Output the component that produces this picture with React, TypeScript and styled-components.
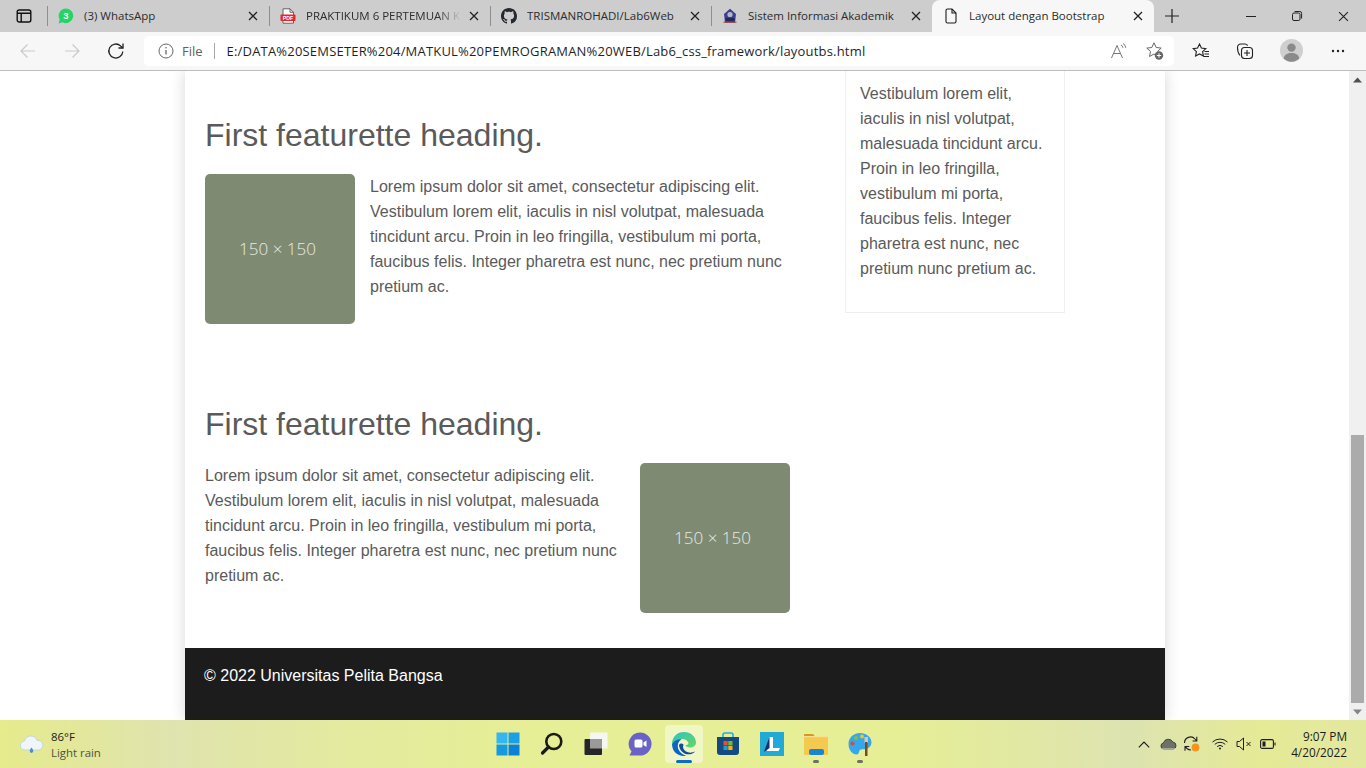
import React from "react";
import styled, { createGlobalStyle } from "styled-components";

const Global = createGlobalStyle`
  html, body { margin: 0; padding: 0; height: 100%; overflow: hidden; background: #fff; }
  * { box-sizing: border-box; }
`;
const Root = styled.div`
  width: 1366px; height: 768px; display: flex; flex-direction: column; overflow: hidden;
  font-family: "Open Sans", "Noto Sans", sans-serif; color: #222;
`;
/* ---------- tab strip ---------- */
const TabStrip = styled.div`
  height: 32px; background: #cdcdcd; display: flex; align-items: stretch; flex: none;
`;
const TabMenu = styled.div`
  width: 47px; display: flex; align-items: center; justify-content: center; padding-left: 1px;
`;
const TabSep = styled.span`
  width: 1px; align-self: center; height: 20px; background: #8e8e8e; flex: none;
`;
const TabGroup = styled.div`
  display: flex; align-items: center;
`;
const TabBody = styled.div<{ $active?: boolean; $w?: number }>`
  width: ${p => p.$w ?? 220}px; height: 32px; display: flex; align-items: center;
  padding: 0 8px 0 ${p => (p.$active ? 11 : 10)}px;
  ${p => p.$active ? "background: #f7f7f7; border-radius: 8px 8px 0 0;" : ""}
`;
const Favicon = styled.span`
  width: 16px; height: 16px; flex: none; display: flex; align-items: center; justify-content: center;
`;
const TabTitle = styled.span<{ $fade?: boolean }>`
  flex: 1; margin-left: 10px; min-width: 0; white-space: nowrap; overflow: hidden; font-size: 11.5px; line-height: 16px; color: #2c2c2c;
  ${p => p.$fade ? "-webkit-mask-image: linear-gradient(to right, #000 82%, transparent 97%); mask-image: linear-gradient(to right, #000 82%, transparent 97%);" : ""}
`;
const TabClose = styled.span`
  width: 16px; height: 16px; flex: none; display: flex; align-items: center; justify-content: center;
`;
const StripEnd = styled.div`
  flex: 1; display: flex; align-items: center;
`;
const NewTab = styled.span`
  margin-left: 10px; width: 16px; height: 16px; display: flex;
`;
const WinButtons = styled.div`
  margin-left: auto; display: flex; align-items: center;
`;
const WinButton = styled.span`
  width: 46px; height: 32px; display: flex; align-items: center; justify-content: center;
`;
/* ---------- toolbar ---------- */
const Toolbar = styled.div`
  height: 39px; flex: none; background: #f7f7f7; border-bottom: 1px solid #bdbdbd; display: flex; align-items: center; padding: 0 0 1px 0;
`;
const ToolButton = styled.span<{ $w?: number }>`
  width: ${p => p.$w ?? 44}px; height: 30px; flex: none; display: flex; align-items: center; justify-content: center;
`;
const NavGroup = styled.div`
  display: flex; padding-left: 6px; width: 144px;
`;
const Address = styled.div`
  width: 1030px; height: 30px; background: #fff; border-radius: 5px; display: flex; align-items: center; padding: 0 0 0 14px;
`;
const FileLabel = styled.span`
  font-size: 13px; color: #5f5f5f; margin-left: 8px;
`;
const AddrSep = styled.span`
  width: 1px; height: 16px; background: #a8a8a8; margin: 0 12px 0 11px;
`;
const Url = styled.span`
  font-size: 13px; color: #1f1f1f; white-space: nowrap; flex: 1; letter-spacing: 0.19px;
`;
const AddrEnd = styled.div`
  display: flex; align-items: center; gap: 17px; padding-right: 9px;
`;
const ToolEnd = styled.div`
  display: flex; align-items: center; padding-left: 5px;
`;
/* ---------- page ---------- */
const Viewport = styled.div`
  flex: 1; min-height: 0; display: flex; background: #fff; overflow: hidden;
`;
const PageArea = styled.div`
  flex: 1; min-width: 0; display: flex; padding-left: 185px;
`;
const Container = styled.div`
  width: 980px; height: 649px; background: #fff; display: flex; flex-direction: column;
  box-shadow: 0 0 14px rgba(0,0,0,0.16);
  font-family: "Liberation Sans", Arial, sans-serif; color: #5a5a5a; font-size: 16px; line-height: 25px;
`;
const Columns = styled.div`
  flex: 1; min-height: 0; display: flex; padding: 0 20px; gap: 55px;
`;
const Main = styled.div`
  width: 585px; display: flex; flex-direction: column; padding-top: 45px; gap: 81px;
`;
const Feature = styled.section`
  display: flex; flex-direction: column;
`;
const Heading = styled.h2`
  margin: 0 0 20px; font-weight: 400; font-size: 32px; line-height: 38px; height: 38px; color: #5a5a5a;
`;
const Media = styled.div`
  display: flex; gap: 15px; align-items: flex-start;
`;
const Placeholder = styled.div`
  width: 150px; height: 150px; flex: none; border-radius: 5px; background: #7f8a73; color: #e8ebe2;
  display: flex; align-items: center; justify-content: center; padding-right: 5px; padding-bottom: 1px;
  font-family: "Open Sans", sans-serif; font-weight: 300; font-size: 17px;
`;
const Lead = styled.p`
  margin: 0; flex: 1;
`;
const Side = styled.aside`
  width: 220px; height: 242px; flex: none; border: 1px solid #eee; border-top: none; padding: 10px 15px 10px 14px;
`;
const Footer = styled.footer`
  height: 72px; flex: none; background: #1c1c1c; color: #fff; padding: 15px 19px;
`;
const Scroll = styled.div`
  width: 17px; flex: none; background: #f0f0f0; display: flex; flex-direction: column; align-items: stretch;
`;
const ScrollArrow = styled.span`
  height: 17px; display: flex; align-items: center; justify-content: center; flex: none;
`;
const Track = styled.div`
  flex: 1; display: flex; flex-direction: column; justify-content: flex-end;
`;
const Thumb = styled.div`
  height: 268px; margin: 0 2px; background: #ababab;
`;
/* ---------- taskbar ---------- */
const Taskbar = styled.div`
  height: 48px; flex: none; display: grid; grid-template-columns: 1fr auto 1fr; align-items: center;
  background: linear-gradient(to right, #e6eb8c 0, #dfe3ae 170px, #e4ea9f 340px, #e6ee96 520px, #e6ee96 900px, #dde3b0 1130px, #e5ea96 1260px, #e3e8a0 1366px);
`;
const Weather = styled.div`
  display: flex; align-items: center; padding: 1px 0 0 19px; gap: 6px;
`;
const WeatherText = styled.div`
  display: flex; flex-direction: column; font-size: 11.4px; line-height: 16px; color: #1b1b1b;
`;
const Muted = styled.span`
  color: #4f5140;
`;
const Dock = styled.div`
  display: flex; align-items: center; justify-content: center; padding-left: 1px;
`;
const DockItem = styled.div<{ $active?: boolean }>`
  width: 44px; height: 38px; position: relative; display: flex; align-items: center; justify-content: center;
  ${p => p.$active ? `
    &::before { content: ""; position: absolute; left: 3px; right: 3px; top: 0; bottom: 0; background: rgba(255,255,255,.45); border-radius: 4px; }
  ` : ""}
  & > svg { position: relative; }
`;
const DockDot = styled.span<{ $active?: boolean }>`
  position: absolute; left: 50%; bottom: 0; height: 3px; border-radius: 2px;
  width: ${p => (p.$active ? 16 : 6)}px; margin-left: ${p => (p.$active ? -8 : -3)}px;
  background: ${p => (p.$active ? "#0a6cc9" : "#6d6f60")};
`;
const Tray = styled.div`
  display: flex; align-items: center; justify-content: flex-end; padding-right: 19px;
`;
const TrayIcon = styled.span<{ $gap?: number }>`
  width: 24px; height: 20px; margin-left: ${p => p.$gap ?? 0}px; display: flex; align-items: center; justify-content: center; flex: none;
`;
const Clock = styled.div`
  margin-left: 11px; text-align: right; font-size: 11.8px; line-height: 16px; color: #1b1b1b;
`;

const X = ({ c = "#222", s = 10, w = 1.3 }: { c?: string; s?: number; w?: number }) => (
  <svg width={s} height={s} viewBox="0 0 10 10"><path d="M1 1l8 8M9 1L1 9" stroke={c} strokeWidth={w} fill="none" /></svg>
);
const LOREM = "Lorem ipsum dolor sit amet, consectetur adipiscing elit. Vestibulum lorem elit, iaculis in nisl volutpat, malesuada tincidunt arcu. Proin in leo fringilla, vestibulum mi porta, faucibus felis. Integer pharetra est nunc, nec pretium nunc pretium ac.";

export default function App() {
  return (
    <Root>
      <Global />
      <TabStrip>
        <TabMenu>
          <svg width="16" height="16" viewBox="0 0 16 16" fill="none" stroke="#111" strokeWidth="1.4"><rect x="1.2" y="2" width="13.6" height="12" rx="2" /><path d="M1.2 5.2h13.6M5.2 5.2V14" /></svg>
        </TabMenu>
        <TabGroup>
          <TabSep />
          <TabBody $w={221}>
            <Favicon>
              <svg width="16" height="16" viewBox="0 0 16 16"><path d="M8 .5a7.3 7.3 0 0 0-6.3 11L.6 15.4l4-1.1A7.3 7.3 0 1 0 8 .5z" fill="#25d366" /><text x="8" y="11.2" textAnchor="middle" fontSize="9.5" fontWeight="700" fill="#fff" fontFamily="Liberation Sans">3</text></svg>
            </Favicon>
            <TabTitle>(3) WhatsApp</TabTitle>
            <TabClose><X /></TabClose>
          </TabBody>
          <TabSep />
          <TabBody>
            <Favicon>
              <svg width="16" height="16" viewBox="0 0 16 16"><path d="M3 .8h7l3.5 3.5V15.2H3z" fill="#fff" stroke="#555" strokeWidth=".9" /><path d="M10 .8v3.5h3.5" fill="none" stroke="#555" strokeWidth=".9" /><rect x=".5" y="6.5" width="15" height="6.5" rx="1" fill="#e5252a" /><text x="8" y="11.6" textAnchor="middle" fontSize="5.2" fontWeight="700" fill="#fff" fontFamily="Liberation Sans">PDF</text></svg>
            </Favicon>
            <TabTitle $fade>PRAKTIKUM 6 PERTEMUAN K</TabTitle>
            <TabClose><X /></TabClose>
          </TabBody>
          <TabSep />
          <TabBody>
            <Favicon>
              <svg width="16" height="16" viewBox="0 0 16 16" fill="#24292f"><path d="M8 0C3.58 0 0 3.58 0 8c0 3.54 2.29 6.53 5.47 7.59.4.07.55-.17.55-.38 0-.19-.01-.82-.01-1.49-2.01.37-2.53-.49-2.69-.94-.09-.23-.48-.94-.82-1.13-.28-.15-.68-.52-.01-.53.63-.01 1.08.58 1.23.82.72 1.21 1.87.87 2.33.66.07-.52.28-.87.51-1.07-1.78-.2-3.64-.89-3.64-3.95 0-.87.31-1.59.82-2.15-.08-.2-.36-1.02.08-2.12 0 0 .67-.21 2.2.82.64-.18 1.32-.27 2-.27s1.36.09 2 .27c1.53-1.04 2.2-.82 2.2-.82.44 1.1.16 1.92.08 2.12.51.56.82 1.27.82 2.15 0 3.07-1.87 3.75-3.65 3.95.29.25.54.73.54 1.48 0 1.07-.01 1.93-.01 2.2 0 .21.15.46.55.38A8.01 8.01 0 0 0 16 8c0-4.42-3.58-8-8-8z" /></svg>
            </Favicon>
            <TabTitle>TRISMANROHADI/Lab6Web</TabTitle>
            <TabClose><X /></TabClose>
          </TabBody>
          <TabSep />
          <TabBody>
            <Favicon>
              <svg width="16" height="16" viewBox="0 0 16 16"><path d="M8 .8l6 5.2-1 8.6H3L2 6z" fill="#3a3f8f" /><circle cx="8" cy="6.5" r="2.6" fill="#b9b6c8" /><rect x="3.5" y="10" width="9" height="3" fill="#23275f" /><path d="M1.5 14.2h13" stroke="#9a3a3a" strokeWidth="1" /></svg>
            </Favicon>
            <TabTitle>Sistem Informasi Akademik</TabTitle>
            <TabClose><X /></TabClose>
          </TabBody>
          <TabBody $active $w={222}>
            <Favicon>
              <svg width="16" height="16" viewBox="0 0 16 16" fill="none" stroke="#1c1c1c" strokeWidth="1.1"><path d="M3 2.5A1.5 1.5 0 0 1 4.5 1H9l4 4v8.5a1.5 1.5 0 0 1-1.5 1.5h-7A1.5 1.5 0 0 1 3 13.5z" /><path d="M9 1v4h4" /></svg>
            </Favicon>
            <TabTitle>Layout dengan Bootstrap</TabTitle>
            <TabClose><X /></TabClose>
          </TabBody>
        </TabGroup>
        <StripEnd>
          <NewTab>
            <svg width="16" height="16" viewBox="0 0 16 16"><path d="M8 1v14M1 8h14" stroke="#222" strokeWidth="1.2" /></svg>
          </NewTab>
          <WinButtons>
            <WinButton><svg width="12" height="12" viewBox="0 0 12 12"><path d="M1 6.5h10" stroke="#222" strokeWidth="1" /></svg></WinButton>
            <WinButton><svg width="12" height="12" viewBox="0 0 12 12" fill="none" stroke="#222" strokeWidth="1"><rect x="1.5" y="3" width="7.5" height="7.5" rx="1.5" /><path d="M3.6 1.5h5.2a1.8 1.8 0 0 1 1.8 1.8v5.2" /></svg></WinButton>
            <WinButton><X c="#222" s={11} w={1} /></WinButton>
          </WinButtons>
        </StripEnd>
      </TabStrip>

      <Toolbar>
        <NavGroup>
          <ToolButton>
            <svg width="18" height="18" viewBox="0 0 18 18" fill="none" stroke="#c9c9c9" strokeWidth="1.2"><path d="M16 9H2M8.5 2.5L2 9l6.5 6.5" /></svg>
          </ToolButton>
          <ToolButton>
            <svg width="18" height="18" viewBox="0 0 18 18" fill="none" stroke="#c9c9c9" strokeWidth="1.2"><path d="M2 9h14M9.5 2.5L16 9l-6.5 6.5" /></svg>
          </ToolButton>
          <ToolButton>
            <svg width="18" height="18" viewBox="0 0 18 18" fill="none" stroke="#222" strokeWidth="1.3"><path d="M15.8 9.5a7 7 0 1 1-2.2-5.6L16 6" /><path d="M16 1.5V6h-4.5" /></svg>
          </ToolButton>
        </NavGroup>
        <Address>
          <svg width="16" height="16" viewBox="0 0 16 16" fill="none" stroke="#666" strokeWidth="1"><circle cx="8" cy="8" r="7" /><path d="M8 7v4.5" strokeWidth="1.3" /><circle cx="8" cy="4.8" r=".8" fill="#666" stroke="none" /></svg>
          <FileLabel>File</FileLabel>
          <AddrSep />
          <Url>E:/DATA%20SEMSETER%204/MATKUL%20PEMROGRAMAN%20WEB/Lab6_css_framework/layoutbs.html</Url>
          <AddrEnd>
            <svg width="18" height="18" viewBox="0 0 18 18" fill="none" stroke="#777" strokeWidth="1"><path d="M1.5 16L7 3.5 12.500 16M3.400 11.500h7.200" /><path d="M11 3a3.500 3.500 0 0 1 2 2.800M13 1.500a5.500 5.500 0 0 1 2.800 4.300" /></svg>
            <svg width="20" height="20" viewBox="0 0 20 20"><path d="M9 1.8l2.2 4.7 5 .6-3.7 3.4 1 5-4.5-2.5-4.5 2.5 1-5L1.8 7.1l5-.6z" fill="none" stroke="#666" strokeWidth="1" /><circle cx="14" cy="14.5" r="4.2" fill="#666" /><path d="M14 12.3v4.4M11.8 14.5h4.4" stroke="#fff" strokeWidth="1" /></svg>
          </AddrEnd>
        </Address>
        <ToolEnd>
          <ToolButton>
            <svg width="18" height="18" viewBox="0 0 18 18" fill="none" stroke="#222" strokeWidth="1.1"><path d="M7.5 2l1.9 4 4.4.6-3.2 3 .8 4.4-3.9-2.1L3.6 14l.8-4.4-3.2-3 4.4-.6z" /><path d="M12.5 9.5h4.5M12.5 12h4.5M11.5 14.5H17" /></svg>
          </ToolButton>
          <ToolButton>
            <svg width="18" height="18" viewBox="0 0 18 18" fill="none" stroke="#222" strokeWidth="1.1"><path d="M4 13.5C2.2 11.5 1.5 8 1.5 5.5 1.5 3.5 3 2 5 2h4c1.2 0 2 .6 2.6 1.6" /><rect x="5.5" y="5.5" width="11" height="11" rx="3" /><path d="M11 8v6M8 11h6" /></svg>
          </ToolButton>
          <ToolButton $w={49}>
            <svg width="23" height="23" viewBox="0 0 23 23"><circle cx="11.5" cy="11.5" r="11.5" fill="#cfcfcf" /><circle cx="11.5" cy="8.6" r="4.2" fill="#8a8a8a" /><path d="M3.6 19.5c.8-3.8 4-5.5 7.9-5.5s7.1 1.7 7.9 5.5a11.5 11.5 0 0 1-15.8 0z" fill="#8a8a8a" /></svg>
          </ToolButton>
          <ToolButton>
            <svg width="14" height="4" viewBox="0 0 14 4" fill="#222"><circle cx="2" cy="2" r="1.2" /><circle cx="7" cy="2" r="1.2" /><circle cx="12" cy="2" r="1.2" /></svg>
          </ToolButton>
        </ToolEnd>
      </Toolbar>

      <Viewport>
        <PageArea>
          <Container>
            <Columns>
              <Main>
                <Feature>
                  <Heading>First featurette heading.</Heading>
                  <Media>
                    <Placeholder>150 × 150</Placeholder>
                    <Lead>{LOREM}</Lead>
                  </Media>
                </Feature>
                <Feature>
                  <Heading>First featurette heading.</Heading>
                  <Media>
                    <Lead>{LOREM}</Lead>
                    <Placeholder>150 × 150</Placeholder>
                  </Media>
                </Feature>
              </Main>
              <Side>Vestibulum lorem elit, iaculis in nisl volutpat, malesuada tincidunt arcu. Proin in leo fringilla, vestibulum mi porta, faucibus felis. Integer pharetra est nunc, nec pretium nunc pretium ac.</Side>
            </Columns>
            <Footer>© 2022 Universitas Pelita Bangsa</Footer>
          </Container>
        </PageArea>
        <Scroll>
          <ScrollArrow><svg width="9" height="6" viewBox="0 0 9 6"><path d="M4.5 0.5L9 5.5H0z" fill="#505050" /></svg></ScrollArrow>
          <Track><Thumb /></Track>
          <ScrollArrow><svg width="9" height="6" viewBox="0 0 9 6"><path d="M4.5 5.5L9 .5H0z" fill="#858585" /></svg></ScrollArrow>
        </Scroll>
      </Viewport>

      <Taskbar>
        <Weather>
          <svg width="26" height="22" viewBox="0 0 26 22"><path d="M6 16a4.5 4.5 0 0 1-.5-9A6.5 6.5 0 0 1 18 6.5a4.8 4.8 0 0 1 2 9.5z" fill="#eef5fb" stroke="#b8cfe6" strokeWidth=".8" /><path d="M12.5 13.5c1.2 1.6 1.8 2.6 1.8 3.6a1.8 1.8 0 0 1-3.6 0c0-1 .6-2 1.8-3.6z" fill="#4a90d9" /></svg>
          <WeatherText>
            <span>86°F</span>
            <Muted>Light rain</Muted>
          </WeatherText>
        </Weather>
        <Dock>
          <DockItem>
            <svg width="24" height="24" viewBox="0 0 24 24"><rect x="0.5" y="0.5" width="11" height="11" fill="#35b6ee" /><rect x="12.5" y="0.5" width="11" height="11" fill="#1ba0e6" /><rect x="0.5" y="12.5" width="11" height="11" fill="#149ae0" /><rect x="12.5" y="12.5" width="11" height="11" fill="#0a80d6" /></svg>
          </DockItem>
          <DockItem>
            <svg width="24" height="24" viewBox="0 0 24 24" fill="none" stroke="#1a1a1a"><circle cx="13.8" cy="9.5" r="7.5" strokeWidth="2.6" /><path d="M8.5 15l-6 6" strokeWidth="3.2" strokeLinecap="round" /></svg>
          </DockItem>
          <DockItem>
            <svg width="24" height="24" viewBox="0 0 24 24"><rect x="6" y="0.5" width="17.5" height="16" rx="1" fill="#f6f6f2" /><rect x="0.5" y="7" width="17.5" height="16" rx="1" fill="#262626" /><rect x="6" y="7" width="12" height="9.5" fill="#9a9a98" /></svg>
          </DockItem>
          <DockItem>
            <svg width="24" height="24" viewBox="0 0 24 24"><path d="M12 .5a11.5 11.5 0 0 1 0 23H1.5l2-4A11.5 11.5 0 0 1 12 .5z" fill="#6a62c7" /><rect x="6.5" y="7.5" width="8" height="8" rx="1.5" fill="#fff" /><path d="M15.5 10.5l3-2v6.500l-3-2z" fill="#fff" /></svg>
          </DockItem>
          <DockItem $active>
            <svg width="26" height="26" viewBox="0 0 26 26">
              <defs>
                <linearGradient id="eg" x1="0" y1="0" x2="1" y2="1"><stop offset="0" stopColor="#2fc2c9" /><stop offset="1" stopColor="#66d85c" /></linearGradient>
              </defs>
              <path d="M1 13C1 5.5 6.5 1 13 1c7 0 12 5 12 10.5 0 3.5-3 5-6 5-2.5 0-4.5-1-4.5-2.5 3 0 3.5-1.5 2.5-3-1.5-2.5-5-3.5-8-2.5C5 9.700 2.500 11 1 13z" fill="url(#eg)" />
              <path d="M1 13c1.500-3 5.500-5.500 9.500-4.500-3.500 2-4.500 6-3 10 1 2.500 3.500 5 7.500 6.300C7.500 26 1 21 1 13z" fill="#0b66c3" />
              <path d="M8 14c.3 5.500 5 10 11 9.300 2-.3 4-1.300 5-2.800-3 1.500-6.500 1.500-9 0-3-1.800-3.500-4.500-2.500-7-1.500-1.500-3.500-1.500-4.500.5z" fill="#0d4f9e" />
            </svg>
            <DockDot $active />
          </DockItem>
          <DockItem>
            <svg width="24" height="24" viewBox="0 0 24 24"><path d="M7 5V3a2 2 0 0 1 2-2h6a2 2 0 0 1 2 2v2" fill="none" stroke="#29a8e0" strokeWidth="1.6" /><path d="M1 5h22v15a3 3 0 0 1-3 3H4a3 3 0 0 1-3-3z" fill="#154a80" /><rect x="7.500" y="9" width="4.200" height="4.200" fill="#e8512a" /><rect x="12.300" y="9" width="4.200" height="4.200" fill="#7ab92b" /><rect x="7.500" y="13.800" width="4.200" height="4.200" fill="#1e9be0" /><rect x="12.300" y="13.800" width="4.200" height="4.200" fill="#f4b21b" /></svg>
          </DockItem>
          <DockItem>
            <svg width="24" height="24" viewBox="0 0 24 24"><rect width="24" height="24" fill="#22a9d6" /><path d="M9.500 5h3.500v11h7l-1.500 3H6.500z" fill="#fff" /><path d="M9.500 5v11l-4.500 3.500h-1z" fill="#17306b" /></svg>
          </DockItem>
          <DockItem>
            <svg width="24" height="24" viewBox="0 0 24 24"><path d="M0 3a1 1 0 0 1 1-1h8l2 2.500h-11z" fill="#d39a1f" /><rect y="4" width="24" height="19" rx="1" fill="#f3c94f" /><rect x="5" y="17" width="15" height="6" rx="2" fill="#1b84cf" /><rect y="4" width="24" height="1.200" fill="#f9e08e" /></svg>
            <DockDot />
          </DockItem>
          <DockItem>
            <svg width="24" height="24" viewBox="0 0 24 24"><path d="M12 1C5 1 .5 6 .5 12c0 6 4 10.500 8 10.500 3 0 2-3 3.500-4.500 1.500-1.300 5 0 7.500-1.500 2.500-1.500 4-3.500 4-6C23.500 5 18 1 12 1z" fill="#35a7ea" /><circle cx="8" cy="6" r="2" fill="#79c33b" /><circle cx="14" cy="4.500" r="2" fill="#f7c21c" /><circle cx="4.500" cy="11.500" r="2.100" fill="#e5482e" /><rect x="16.500" y="5" width="3.500" height="6" fill="#d9c9a8" /><rect x="17" y="10" width="2.500" height="14" fill="#7b4a23" /></svg>
            <DockDot />
          </DockItem>
        </Dock>
        <Tray>
          <TrayIcon>
            <svg width="12" height="7" viewBox="0 0 12 7" fill="none" stroke="#1a1a1a" strokeWidth="1.1"><path d="M.8 6.300L6 1l5.200 5.300" /></svg>
          </TrayIcon>
          <TrayIcon>
            <svg width="17" height="12" viewBox="0 0 17 12"><path d="M4 11.300a3.300 3.300 0 0 1-.5-6.500 5 5 0 0 1 9.300-.8 3.700 3.700 0 0 1 .2 7.300z" fill="#6d7166" stroke="#3a3a3a" strokeWidth=".9" /><path d="M1 10.500h15v1H3z" fill="#e6e9d8" /></svg>
          </TrayIcon>
          <TrayIcon>
            <svg width="18" height="18" viewBox="0 0 18 18"><path d="M1.500 8a6 6 0 0 1 10.500-4l1.800 2M13.800 1.800V6H9.600M2 11.500l2 2a6 6 0 0 0 4 1.500M2 15.800v-4.300h4.300" fill="none" stroke="#1f1f1f" strokeWidth="1.1" /><circle cx="12.500" cy="12.500" r="3.900" fill="#f6941c" /></svg>
          </TrayIcon>
          <TrayIcon $gap={4}>
            <svg width="16" height="12" viewBox="0 0 16 12" fill="none" stroke="#1f1f1f" strokeWidth="1"><path d="M.5 4a11 11 0 0 1 15 0M2.800 6.300a7.800 7.800 0 0 1 10.400 0M5.100 8.600a4.400 4.400 0 0 1 5.800 0" /><circle cx="8" cy="10.500" r="1" fill="#1f1f1f" stroke="none" /></svg>
          </TrayIcon>
          <TrayIcon>
            <svg width="16" height="14" viewBox="0 0 16 14" fill="none" stroke="#1f1f1f" strokeWidth="1"><path d="M1 4.500h2.500L7.500 1v12L3.500 9.500H1zM10.500 5l4 4M14.500 5l-4 4" /></svg>
          </TrayIcon>
          <TrayIcon>
            <svg width="16" height="10" viewBox="0 0 16 10" fill="none" stroke="#1f1f1f" strokeWidth="1.1"><rect x=".6" y=".6" width="12.800" height="8.800" rx="1.500" /><rect x="2.500" y="2.500" width="3" height="5" fill="#1f1f1f" stroke="none" /><path d="M15 3.500v3" /></svg>
          </TrayIcon>
          <Clock>
            <div>9:07 PM</div>
            <div>4/20/2022</div>
          </Clock>
        </Tray>
      </Taskbar>
    </Root>
  );
}
